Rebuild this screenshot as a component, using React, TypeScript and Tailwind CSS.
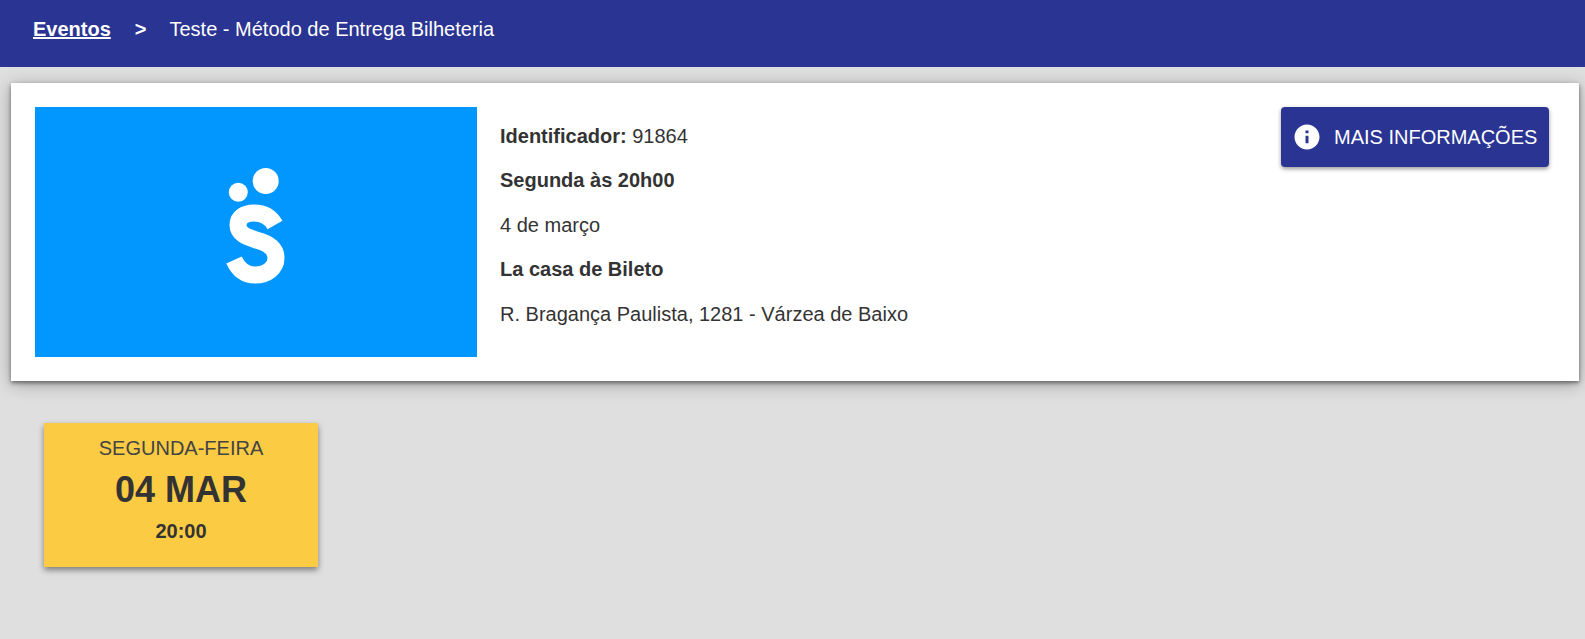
import React from 'react';

const Logo = () => (
  <svg width="120" height="140" viewBox="-4 12 120 140" fill="none">
    <circle cx="65.7" cy="31" r="13" fill="#fff" />
    <circle cx="38.3" cy="42.3" r="9.5" fill="#fff" />
    <path
      d="M75 75C70 66 62 63 54 63C45 63 38 67 38 75C38 84 47 87 56 90C68 93 76 98 76 108C76 118 67 125 55 125C46 125 39 121 34 110"
      stroke="#fff"
      strokeWidth="17"
    />
  </svg>
);

const InfoIcon = () => (
  <svg width="30" height="30" viewBox="0 0 24 24" fill="#fff">
    <path d="M12 2C6.48 2 2 6.48 2 12s4.48 10 10 10 10-4.48 10-10S17.52 2 12 2zm1.2 15h-2.4v-6h2.4v6zm0-8h-2.4V6.8h2.4V9z" />
  </svg>
);

export default function App() {
  return (
    <div className="min-h-[639px] bg-[#dfdfdf] font-['Liberation_Sans',Arial,sans-serif] text-[20px] text-[#333333]">
      <header className="flex h-[67px] items-start bg-[#2a3492] pl-[33px] pt-[18px] leading-[23px] text-white">
        <a className="font-bold underline">Eventos</a>
        <span className="ml-[24px] font-bold">&gt;</span>
        <span className="ml-[23px]">Teste - Método de Entrega Bilheteria</span>
      </header>

      <section className="ml-[11px] mr-[6px] mt-[16px] flex h-[298px] bg-white py-[24px] pl-[24px] pr-[30px] shadow-[0_2px_4px_rgba(0,0,0,0.45),0_3px_16px_rgba(0,0,0,0.3)]">
        <div className="flex h-[250px] w-[442px] items-center justify-center bg-[#0197fe]">
          <Logo />
        </div>
        <div className="ml-[23px] flex-1 pt-[7px] leading-[44.4px]">
          <p>
            <b>Identificador:</b> 91864
          </p>
          <p className="font-bold">Segunda às 20h00</p>
          <p>4 de março</p>
          <p className="font-bold">La casa de Bileto</p>
          <p>R. Bragança Paulista, 1281 - Várzea de Baixo</p>
        </div>
        <button className="flex h-[60px] w-[268px] items-center rounded-[4px] bg-[#2a3492] pl-[11px] text-white shadow-[0_2px_4px_rgba(0,0,0,0.4)]">
          <InfoIcon />
          <span className="ml-[12px] leading-[23px]">MAIS INFORMAÇÕES</span>
        </button>
      </section>

      <div className="ml-[44px] mt-[42px] flex h-[144px] w-[274px] flex-col items-center bg-[#fbcb43] pt-[14px] shadow-[0_3px_6px_rgba(0,0,0,0.45)]">
        <div className="leading-[23px] text-[#444444]">SEGUNDA-FEIRA</div>
        <div className="mt-[9px] text-[36px] font-bold leading-[41px]">04 MAR</div>
        <div className="mt-[10px] font-bold leading-[23px]">20:00</div>
      </div>
    </div>
  );
}
